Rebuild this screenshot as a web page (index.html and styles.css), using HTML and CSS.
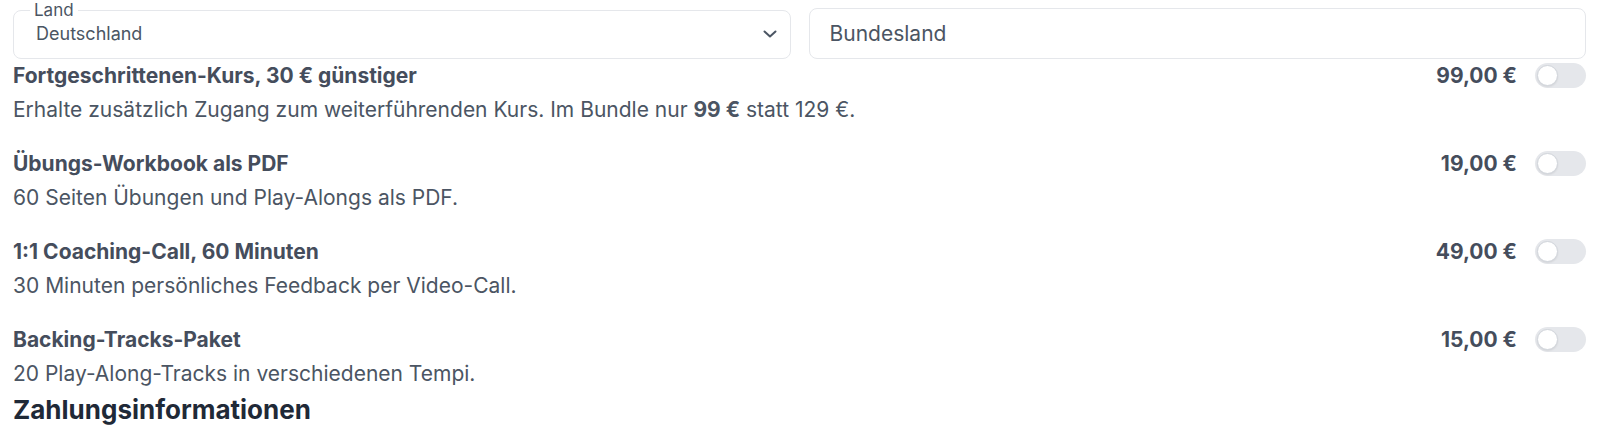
FILE: index.html
```html
<!DOCTYPE html>
<html lang="de">
<head>
  <meta charset="UTF-8">
  <title>Checkout - Zusatzangebote</title>
  <link rel="stylesheet" href="styles.css">
</head>
<body>
  <div class="address-row">
    <fieldset class="select-field">
      <legend>Land</legend>
      <div class="select-value">
        <span>Deutschland</span>
        <svg class="chevron" width="14" height="8" viewBox="0 0 14 8" fill="none" stroke="currentColor" stroke-width="2" stroke-linecap="round" stroke-linejoin="round"><path d="M1.5 1.5l5.5 5 5.5-5"/></svg>
      </div>
    </fieldset>
    <div class="text-field">Bundesland</div>
  </div>

  <div class="addons">
    <div class="addon">
      <div class="addon-header">
        <span class="addon-title">Fortgeschrittenen-Kurs, 30 € günstiger</span>
        <div class="addon-side">
          <span class="addon-price">99,00 €</span>
          <span class="toggle"><span class="knob"></span></span>
        </div>
      </div>
      <p class="addon-desc">Erhalte zusätzlich Zugang zum weiterführenden Kurs. Im Bundle nur <strong>99 €</strong> statt 129 €.</p>
    </div>

    <div class="addon">
      <div class="addon-header">
        <span class="addon-title">Übungs-Workbook als PDF</span>
        <div class="addon-side">
          <span class="addon-price">19,00 €</span>
          <span class="toggle"><span class="knob"></span></span>
        </div>
      </div>
      <p class="addon-desc">60 Seiten Übungen und Play-Alongs als PDF.</p>
    </div>

    <div class="addon">
      <div class="addon-header">
        <span class="addon-title">1:1 Coaching-Call, 60 Minuten</span>
        <div class="addon-side">
          <span class="addon-price">49,00 €</span>
          <span class="toggle"><span class="knob"></span></span>
        </div>
      </div>
      <p class="addon-desc">30 Minuten persönliches Feedback per Video-Call.</p>
    </div>

    <div class="addon">
      <div class="addon-header">
        <span class="addon-title">Backing-Tracks-Paket</span>
        <div class="addon-side">
          <span class="addon-price">15,00 €</span>
          <span class="toggle"><span class="knob"></span></span>
        </div>
      </div>
      <p class="addon-desc">20 Play-Along-Tracks in verschiedenen Tempi.</p>
    </div>
  </div>

  <h2 class="section-title">Zahlungsinformationen</h2>
</body>
</html>
```

FILE: styles.css
```css
:root {
  --text: #4b5563;
  --text-strong: #454d5c;
  --heading: #1f2937;
  --border: #e5e7eb;
  --track: #e5e7eb;
  --white: #ffffff;
  --radius: 8px;
}

* {
  margin: 0;
  padding: 0;
  box-sizing: border-box;
}

body {
  font-family: Inter, "Noto Sans", sans-serif;
  color: var(--text);
  background: var(--white);
  padding: 1px 14px 0 13px;
}

.address-row {
  display: grid;
  grid-template-columns: 1fr 1fr;
  gap: 18px;
  align-items: end;
}

.select-field {
  border: 1px solid var(--border);
  border-radius: var(--radius);
  padding: 0 13px 0 22px;
  min-width: 0;
}
.select-field legend {
  font-size: 17px;
  line-height: 18px;
  padding: 0 4px;
  margin-left: -6px;
  color: var(--text);
}
.select-value {
  display: flex;
  align-items: center;
  justify-content: space-between;
  font-size: 18px;
  line-height: 24px;
  padding: 3px 0 12px;
}
.chevron {
  color: var(--text);
}

.text-field {
  height: 51px;
  display: flex;
  align-items: center;
  padding: 0 20px;
  border: 1px solid var(--border);
  border-radius: var(--radius);
  font-size: 21px;
}

.addons {
  display: flex;
  flex-direction: column;
  gap: 26px;
  padding-top: 3px;
}

.addon-header {
  display: flex;
  align-items: center;
  justify-content: space-between;
  height: 26px;
}
.addon-title,
.addon-price {
  font-size: 21px;
  font-weight: 650;
  color: var(--text-strong);
}
.addon-side {
  display: flex;
  align-items: center;
  gap: 18px;
}

.toggle {
  display: block;
  position: relative;
  width: 51px;
  height: 25px;
  border-radius: 20px;
  background: var(--track);
}
.knob {
  position: absolute;
  top: 2px;
  left: 2px;
  width: 21px;
  height: 21px;
  border-radius: 50%;
  background: var(--white);
  border: 1px solid #d1d5db;
  box-shadow: 0 1px 2px rgba(0,0,0,0.08);
}

.addon-desc {
  margin-top: 8px;
  font-size: 21px;
  line-height: 28px;
}
.addon-desc strong {
  font-weight: 700;
}

.section-title {
  margin-top: 6px;
  font-size: 26px;
  line-height: 32px;
  font-weight: 700;
  color: var(--heading);
}
```
